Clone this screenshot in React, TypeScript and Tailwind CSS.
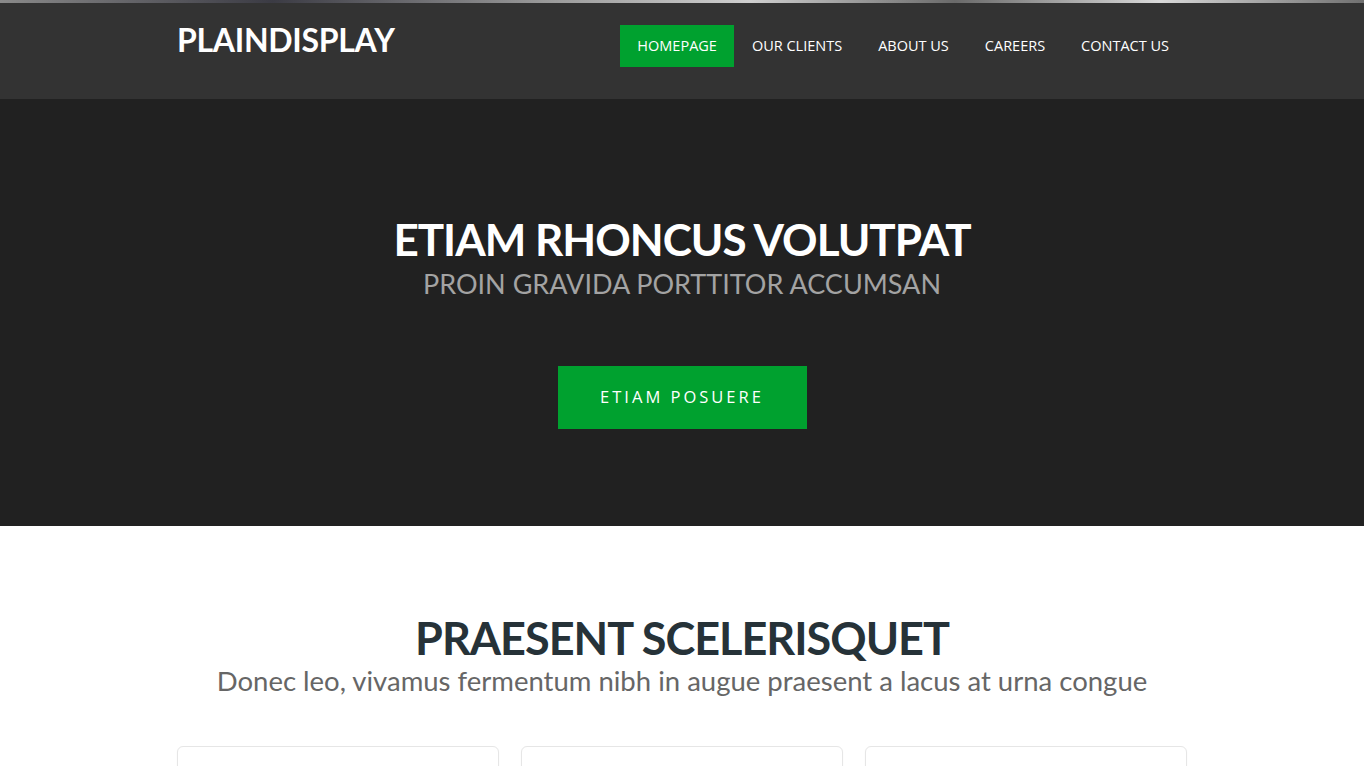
import React from "react";

const navItems = ["Homepage", "Our Clients", "About Us", "Careers", "Contact Us"];

const App: React.FC = () => {
    return (
        <div className="min-h-screen bg-white" style={{ fontFamily: "Lato, 'Open Sans', sans-serif" }}>
            {/* strip left from a screenshot above the page */}
            <div className="h-[3px] bg-[linear-gradient(90deg,#8a8a8a_0%,#3b3b44_20%,#9a9a9a_40%,#cfcfcf_55%,#6a6a6a_70%,#d9d9d9_85%,#707070_100%)]" />
            <header className="bg-[#333333]">
                <div className="mx-auto flex h-[96px] w-[1010px] items-start justify-between">
                    <a className="mt-[17px] text-[32px] font-bold leading-[40px] tracking-[-0.3px] text-white">PLAINDISPLAY</a>
                    <nav className="mt-[22px] flex">
                        {navItems.map((item, i) => (
                            <a
                                key={item}
                                className={
                                    "text-[14.5px] uppercase leading-[42px] text-white " +
                                    (i === 0 ? "bg-[#00a12f] px-[17px]" : "px-[18px]")
                                }
                                style={{ fontFamily: "'Open Sans', sans-serif" }}
                            >
                                {item}
                            </a>
                        ))}
                    </nav>
                </div>
            </header>
            <section className="flex h-[427px] flex-col items-center bg-[#212121] pt-[112px]">
                <h1 className="text-[44px] font-bold leading-[56px] tracking-[-1px] text-white">ETIAM RHONCUS VOLUTPAT</h1>
                <h2 className="text-[27px] leading-[34px] text-[#a3a3a3]">PROIN GRAVIDA PORTTITOR ACCUMSAN</h2>
                <button
                    className="mt-[65px] h-[63px] w-[249px] bg-[#00a12f] text-[16.5px] tracking-[3px] text-white"
                    style={{ fontFamily: "'Open Sans', sans-serif" }}
                >
                    ETIAM POSUERE
                </button>
            </section>
            <section className="flex flex-col items-center pt-[84px]">
                <h2 className="text-[45px] font-bold leading-[56px] tracking-[-1px] text-[#263238]">PRAESENT SCELERISQUET</h2>
                <p className="-mt-[3px] text-[27.5px] leading-[36px] text-[#666666]">
                    Donec leo, vivamus fermentum nibh in augue praesent a lacus at urna congue
                </p>
                <div className="mt-[47px] grid w-[1010px] grid-cols-3 gap-[22px]">
                    {[0, 1, 2].map((n) => (
                        <div key={n} className="h-[200px] rounded-[6px] border border-[#e6e6e6] bg-white shadow-[0_1px_2px_rgba(0,0,0,0.04)]" />
                    ))}
                </div>
            </section>
        </div>
    );
};

export default App;
